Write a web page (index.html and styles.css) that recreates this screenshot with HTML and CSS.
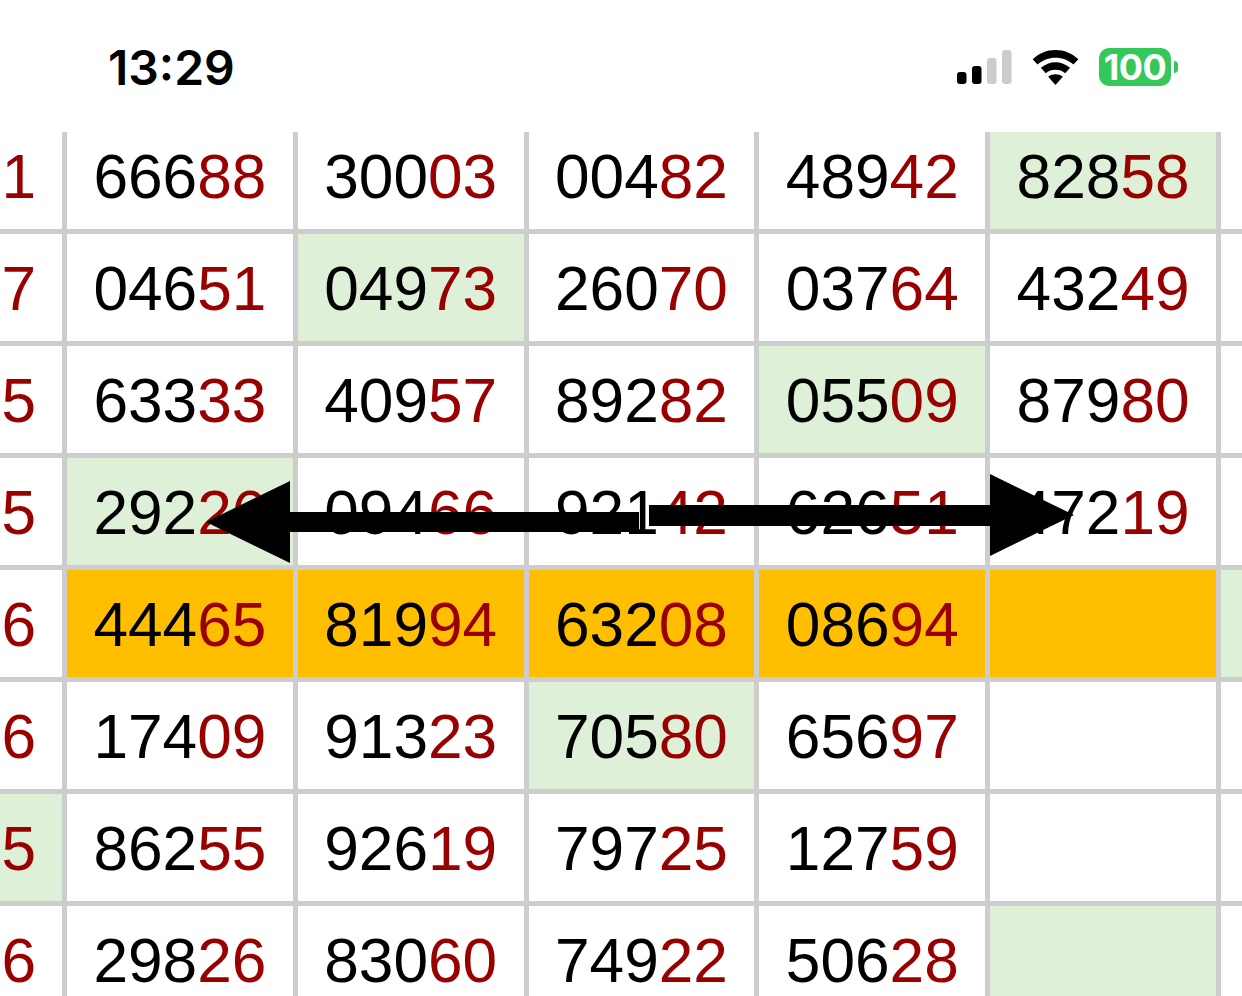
FILE: index.html
```html
<!DOCTYPE html>
<html lang="en">
<head>
<meta charset="utf-8">
<title>Number table</title>
<link rel="stylesheet" href="styles.css">
</head>
<body>
<div class="screen">
  <header class="status">
    <span class="time">13:29</span>
    <div class="indicators">
      <svg class="signal" width="55" height="34" viewBox="0 0 55 34"><rect x="0" y="22" width="9.500" height="12" rx="3" fill="#000"/><rect x="15" y="16" width="9.500" height="18" rx="3" fill="#000"/><rect x="30" y="8" width="9.500" height="26" rx="3" fill="#ccc"/><rect x="45" y="0" width="9.500" height="34" rx="3" fill="#ccc"/></svg>
      <svg class="wifi" width="47" height="35" viewBox="0 0 48 36"><path d="M24 0C15 0 7 3.400 0.500 9.500L5.500 15C10.500 10.500 17 8 24 8S37.500 10.500 42.500 15L47.500 9.500C41 3.400 33 0 24 0Z" fill="#000"/><path d="M24 12.500C18.500 12.500 13.500 14.500 9 18.300L14 23.800C16.800 21.500 20 20.300 24 20.300S31.200 21.500 34 23.800L39 18.300C34.500 14.500 29.500 12.500 24 12.500Z" fill="#000"/><path d="M24 25C21 25 19 25.800 16.500 27.500L24 36L31.500 27.500C29 25.800 27 25 24 25Z" fill="#000"/></svg>
      <div class="battery"><span class="level">100</span><span class="cap"></span></div>
    </div>
  </header>
  <main class="sheet">
    <div class="cell tail"><span class="hot">1</span></div>
    <div class="cell">666<span class="hot">88</span></div>
    <div class="cell">300<span class="hot">03</span></div>
    <div class="cell">004<span class="hot">82</span></div>
    <div class="cell">489<span class="hot">42</span></div>
    <div class="cell green">828<span class="hot">58</span></div>
    <div class="cell"></div>

    <div class="cell tail"><span class="hot">7</span></div>
    <div class="cell">046<span class="hot">51</span></div>
    <div class="cell green">049<span class="hot">73</span></div>
    <div class="cell">260<span class="hot">70</span></div>
    <div class="cell">037<span class="hot">64</span></div>
    <div class="cell">432<span class="hot">49</span></div>
    <div class="cell"></div>

    <div class="cell tail"><span class="hot">5</span></div>
    <div class="cell">633<span class="hot">33</span></div>
    <div class="cell">409<span class="hot">57</span></div>
    <div class="cell">892<span class="hot">82</span></div>
    <div class="cell green">055<span class="hot">09</span></div>
    <div class="cell">879<span class="hot">80</span></div>
    <div class="cell"></div>

    <div class="cell tail"><span class="hot">5</span></div>
    <div class="cell green">292<span class="hot">26</span></div>
    <div class="cell">094<span class="hot">66</span></div>
    <div class="cell">921<span class="hot">42</span></div>
    <div class="cell">626<span class="hot">51</span></div>
    <div class="cell">472<span class="hot">19</span></div>
    <div class="cell"></div>

    <div class="cell tail"><span class="hot">6</span></div>
    <div class="cell orange">444<span class="hot">65</span></div>
    <div class="cell orange">819<span class="hot">94</span></div>
    <div class="cell orange">632<span class="hot">08</span></div>
    <div class="cell orange">086<span class="hot">94</span></div>
    <div class="cell orange"></div>
    <div class="cell green"></div>

    <div class="cell tail"><span class="hot">6</span></div>
    <div class="cell">174<span class="hot">09</span></div>
    <div class="cell">913<span class="hot">23</span></div>
    <div class="cell green">705<span class="hot">80</span></div>
    <div class="cell">656<span class="hot">97</span></div>
    <div class="cell"></div>
    <div class="cell"></div>

    <div class="cell tail green"><span class="hot">5</span></div>
    <div class="cell">862<span class="hot">55</span></div>
    <div class="cell">926<span class="hot">19</span></div>
    <div class="cell">797<span class="hot">25</span></div>
    <div class="cell">127<span class="hot">59</span></div>
    <div class="cell"></div>
    <div class="cell"></div>

    <div class="cell tail"><span class="hot">6</span></div>
    <div class="cell">298<span class="hot">26</span></div>
    <div class="cell">830<span class="hot">60</span></div>
    <div class="cell">749<span class="hot">22</span></div>
    <div class="cell">506<span class="hot">28</span></div>
    <div class="cell green"></div>
    <div class="cell"></div>
  </main>
  <svg class="arrows" width="1242" height="996" viewBox="0 0 1242 996">
    <polygon points="206,522 290,481 290,512 639,512 639,532 290,532 290,563" fill="#000"/>
    <polygon points="1074,515 990,474 990,505 649,505 649,526 990,526 990,556" fill="#000"/>
  </svg>
</div>
</body>
</html>
```
FILE: styles.css
```css
* { box-sizing: border-box; }
html, body { margin: 0; padding: 0; background: #fff; }
.screen {
  position: relative;
  width: 1242px;
  height: 996px;
  overflow: hidden;
  background: #fff;
}
.status {
  height: 132px;
  display: flex;
  justify-content: space-between;
  align-items: flex-start;
  padding: 41px 64px 0 108px;
}
.time {
  font-family: Inter, "Liberation Sans", sans-serif;
  font-weight: 600;
  font-size: 48px;
  line-height: 54px;
  color: #000;
}
.indicators {
  display: flex;
  align-items: center;
  gap: 20px;
  padding-top: 7px;
}
.battery { display: flex; align-items: center; }
.level {
  width: 72px;
  height: 38px;
  border-radius: 10px;
  background: #34c759;
  color: #fff;
  font-family: Inter, "Liberation Sans", sans-serif;
  font-weight: 700;
  font-size: 36px;
  line-height: 38px;
  text-align: center;
  letter-spacing: -0.5px;
}
.cap {
  width: 4px;
  height: 12px;
  margin-left: 3px;
  border-radius: 0 5px 5px 0;
  background: #34c759;
}
.sheet {
  display: grid;
  grid-template-columns: 62px repeat(5, 225.8px) 40px;
  grid-template-rows: 97px repeat(7, 107px);
  gap: 5px;
  background: #cdcdcd;
  width: 1242px;
}
.cell {
  background: #fff;
  color: #000;
  font-family: "Liberation Sans", Arial, sans-serif;
  font-size: 62.200px;
  line-height: 109px;
  text-align: center;
  white-space: nowrap;
  overflow: hidden;
}
.cell:nth-child(-n+7) { line-height: 89px; }
.cell.tail {
  text-align: right;
  padding-right: 26px;
}
.hot { color: #990000; }
.green { background: #dff0d8; }
.orange { background: #ffbf00; }
.arrows {
  position: absolute;
  left: 0;
  top: 0;
  pointer-events: none;
}
```
